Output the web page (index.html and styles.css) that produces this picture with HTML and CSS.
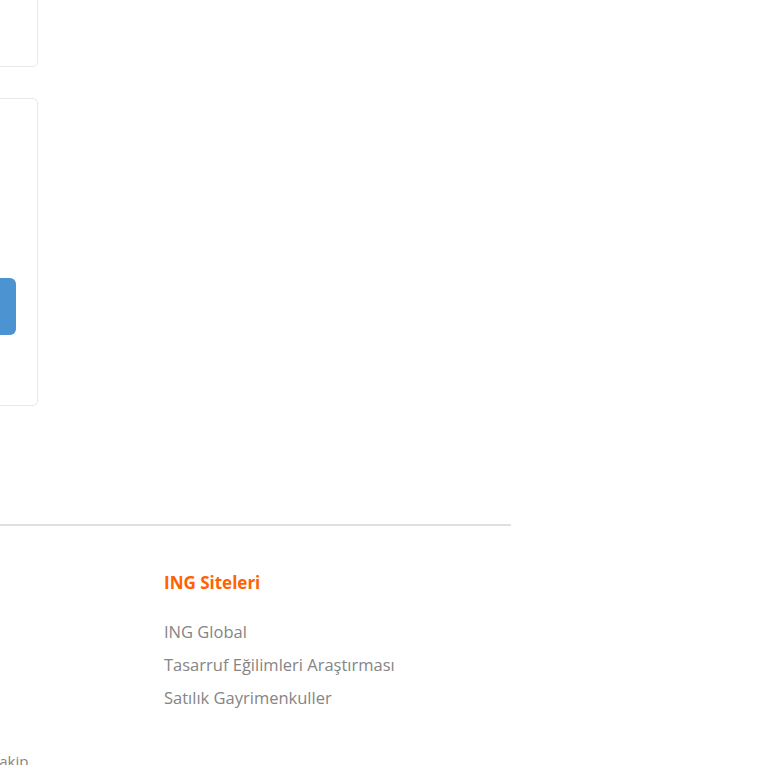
FILE: index.html
```html
<!DOCTYPE html>
<html lang="tr">
<head>
  <meta charset="UTF-8">
  <meta name="viewport" content="width=device-width, initial-scale=1.0">
  <title>ING</title>
  <link rel="stylesheet" href="styles.css">
</head>
<body>
  <div class="page">
    <!-- kartlar -->
    <main class="content">
      <div class="card card-top"></div>
      <div class="card card-form">
        <button class="btn-primary" type="button" aria-label="Gönder"></button>
      </div>
    </main>

    <!-- alt bilgi -->
    <footer class="footer">
      <div class="footer-col footer-col-first">
        <p class="follow">Takip</p>
      </div>
      <div class="footer-col">
        <h3 class="footer-title">ING Siteleri</h3>
        <ul class="footer-links">
          <li><a href="#">ING Global</a></li>
          <li><a href="#">Tasarruf Eğilimleri Araştırması</a></li>
          <li><a href="#">Satılık Gayrimenkuller</a></li>
        </ul>
      </div>
    </footer>
  </div>
</body>
</html>
```

FILE: styles.css
```css
/* genel */
body {
  margin: 0;
  font-family: "Open Sans", Lato, sans-serif;
  background: #fff;
  color: #858585;
  overflow: hidden;
}

.page {
  margin-left: -400px;
  width: 911px;
}

/* kartlar */
.content {
  width: 438px;
  display: flex;
  flex-direction: column;
  gap: 31px;
}

.card {
  box-sizing: border-box;
  background: #fff;
  border: 1px solid #e8e8e8;
  border-radius: 5px;
}

.card-top {
  height: 80px;
  margin-top: -13px;
}

.card-form {
  height: 308px;
  padding: 179px 21px 0 0;
  display: flex;
  justify-content: flex-end;
  align-items: flex-start;
}

.btn-primary {
  width: 200px;
  height: 57px;
  border: none;
  border-radius: 6px;
  background: #4b93d1;
}

/* alt bilgi */
.footer {
  margin-top: 118px;
  border-top: 2px solid #e0e0e0;
  display: flex;
  padding-top: 45px;
}

.footer-col-first {
  width: 564px;
  display: flex;
  flex-direction: column;
  justify-content: flex-end;
}

.follow {
  margin: 0 0 -6px 391px;
  font-size: 15px;
}

.footer-title {
  margin: 0 0 26px;
  font-size: 17px;
  font-weight: 700;
  color: #ff6200;
}

.footer-links {
  list-style: none;
  margin: 0;
  padding: 0 0 46px;
}

.footer-links li {
  height: 33px;
}

.footer-links a {
  color: #858585;
  text-decoration: none;
  font-size: 16.5px;
}
```
